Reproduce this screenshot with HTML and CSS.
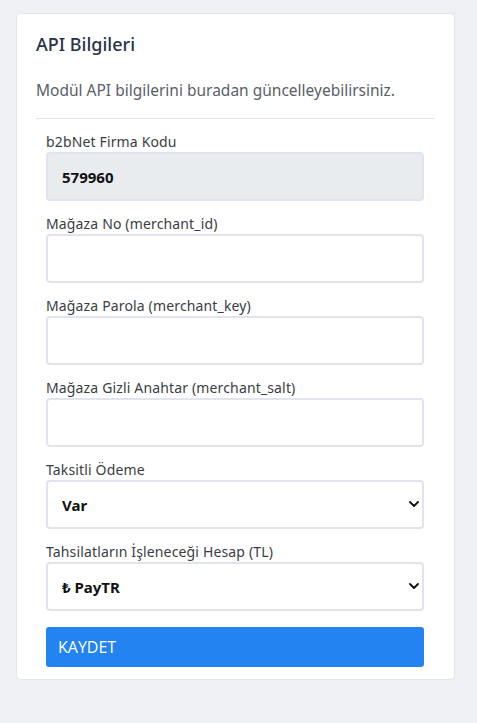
FILE: index.html
```html
<!DOCTYPE html>
<html lang="tr">
<head>
<meta charset="utf-8">
<link rel="stylesheet" href="styles.css">
</head>
<body>
<div class="card">
  <h2 class="title">API Bilgileri</h2>
  <p class="subtitle">Modül API bilgilerini buradan güncelleyebilirsiniz.</p>
  <hr class="divider">
  <form class="form">
    <div class="field">
      <label class="label">b2bNet Firma Kodu</label>
      <input class="input input-readonly" type="text" value="579960" readonly>
    </div>
    <div class="field">
      <label class="label">Mağaza No (merchant_id)</label>
      <input class="input" type="text">
    </div>
    <div class="field">
      <label class="label">Mağaza Parola (merchant_key)</label>
      <input class="input" type="text">
    </div>
    <div class="field">
      <label class="label">Mağaza Gizli Anahtar (merchant_salt)</label>
      <input class="input" type="text">
    </div>
    <div class="field">
      <label class="label">Taksitli Ödeme</label>
      <div class="select-wrap">
        <select class="input select"><option>Var</option></select>
        <svg class="chevron" viewBox="0 0 10 6" width="10" height="6"><path d="M1 1l4 4 4-4" fill="none" stroke="#111" stroke-width="1.8" stroke-linecap="round" stroke-linejoin="round"/></svg>
      </div>
    </div>
    <div class="field">
      <label class="label">Tahsilatların İşleneceği Hesap (TL)</label>
      <div class="select-wrap">
        <select class="input select"><option>₺ PayTR</option></select>
        <svg class="chevron" viewBox="0 0 10 6" width="10" height="6"><path d="M1 1l4 4 4-4" fill="none" stroke="#111" stroke-width="1.8" stroke-linecap="round" stroke-linejoin="round"/></svg>
      </div>
    </div>
    <button class="btn" type="button">KAYDET</button>
  </form>
</div>
</body>
</html>
```
FILE: styles.css
```css
* { box-sizing: border-box; }
html, body { margin: 0; padding: 0; }
body {
  background: #eff0f4;
  font-family: "Noto Sans", "Open Sans", sans-serif;
  color: #333;
  padding: 13px 22px 0 16px;
  height: 723px;
}
.card {
  background: #fff;
  border: 1px solid #e3e5ea;
  border-radius: 5px;
  padding: 19px 20px 12px 19px;
  width: 439px;
}
.title {
  margin: 0;
  font-size: 18px;
  font-weight: 500;
  color: #273248;
  line-height: 22px;
}
.subtitle {
  margin: 24px 0 0;
  font-size: 15.5px;
  color: #5a5f69;
  line-height: 22px;
}
.divider {
  border: 0;
  border-top: 1px solid #e2e3e6;
  margin: 17px 0 0;
}
.form {
  padding: 14px 10px 0;
  display: flex;
  flex-direction: column;
}
.field {
  display: flex;
  flex-direction: column;
  margin-bottom: 14px;
}
.label {
  font-size: 14px;
  letter-spacing: 0.15px;
  color: #3a3d44;
  line-height: 18px;
  margin-bottom: 1px;
}
.input {
  height: 49px;
  width: 100%;
  border: 2px solid #e1e4ee;
  border-radius: 4px;
  background: #fff;
  font-family: inherit;
  font-size: 15px;
  font-weight: 700;
  color: #111;
  padding: 0 14px;
  outline: none;
}
.input-readonly {
  background: #e9ecef;
}
.select-wrap {
  position: relative;
}
.select {
  appearance: none;
  -webkit-appearance: none;
}
.chevron {
  position: absolute;
  right: 5px;
  top: 21px;
  pointer-events: none;
}
.btn {
  margin-top: 2px;
  height: 40px;
  width: 100%;
  border: 0;
  border-radius: 3px;
  background: #2383f0;
  color: #fff;
  font-family: "Open Sans", sans-serif;
  font-size: 16px;
  text-align: left;
  padding: 0 12px;
}
```
